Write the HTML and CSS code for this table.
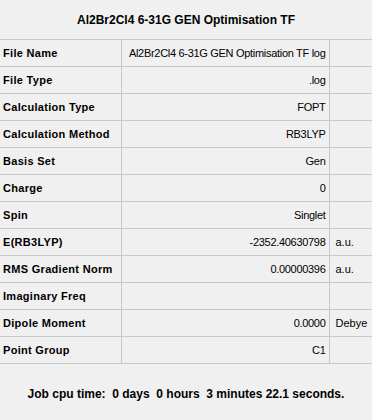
FILE: index.html
```html
<!DOCTYPE html>
<html>
<head>
<meta charset="utf-8">
<link rel="stylesheet" href="styles.css">
</head>
<body>
<div class="panel">
  <div class="title">Al2Br2Cl4 6-31G GEN Optimisation TF</div>
  <table class="summary">
    <tr><th>File Name</th><td class="val">Al2Br2Cl4 6-31G GEN Optimisation TF log</td><td class="unit"></td></tr>
    <tr><th>File Type</th><td class="val">.log</td><td class="unit"></td></tr>
    <tr><th>Calculation Type</th><td class="val">FOPT</td><td class="unit"></td></tr>
    <tr><th>Calculation Method</th><td class="val">RB3LYP</td><td class="unit"></td></tr>
    <tr><th>Basis Set</th><td class="val">Gen</td><td class="unit"></td></tr>
    <tr><th>Charge</th><td class="val">0</td><td class="unit"></td></tr>
    <tr><th>Spin</th><td class="val">Singlet</td><td class="unit"></td></tr>
    <tr><th>E(RB3LYP)</th><td class="val">-2352.40630798</td><td class="unit">a.u.</td></tr>
    <tr><th>RMS Gradient Norm</th><td class="val">0.00000396</td><td class="unit">a.u.</td></tr>
    <tr><th>Imaginary Freq</th><td class="val"></td><td class="unit"></td></tr>
    <tr><th>Dipole Moment</th><td class="val">0.0000</td><td class="unit">Debye</td></tr>
    <tr><th>Point Group</th><td class="val">C1</td><td class="unit"></td></tr>
  </table>
  <div class="cpu">Job cpu time:  0 days  0 hours  3 minutes 22.1 seconds.</div>
</div>
</body>
</html>
```
FILE: styles.css
```css
html, body {
  margin: 0;
  padding: 0;
  background: #f0f0f0;
}

.panel {
  width: 372px;
  height: 420px;
  font-family: "Liberation Sans", Arial, sans-serif;
  color: #000;
}

.title {
  height: 39px;
  line-height: 40px;
  text-align: center;
  font-weight: bold;
  font-size: 12px;
}

.summary {
  width: 372px;
  border-collapse: collapse;
  table-layout: fixed;
  font-size: 11px;
}

.summary tr {
  height: 27px;
  border-top: 1px solid #c8c8c8;
  border-bottom: 1px solid #c8c8c8;
}

.summary th,
.summary td {
  padding: 0;
  height: 26px;
  vertical-align: middle;
  white-space: nowrap;
  overflow: hidden;
}

.summary th {
  width: 121px;
  text-align: left;
  padding-left: 3px;
  box-sizing: border-box;
  font-weight: bold;
  letter-spacing: 0.3px;
  border-right: 1px solid #c8c8c8;
}

.summary .val {
  width: 208px;
  text-align: right;
  padding-right: 3px;
  box-sizing: border-box;
  letter-spacing: -0.3px;
  border-right: 1px solid #c8c8c8;
}

.summary .unit {
  text-align: left;
  padding-left: 6px;
}

.cpu {
  padding-top: 23px;
  text-align: center;
  font-weight: bold;
  font-size: 12px;
  white-space: pre;
}
```
